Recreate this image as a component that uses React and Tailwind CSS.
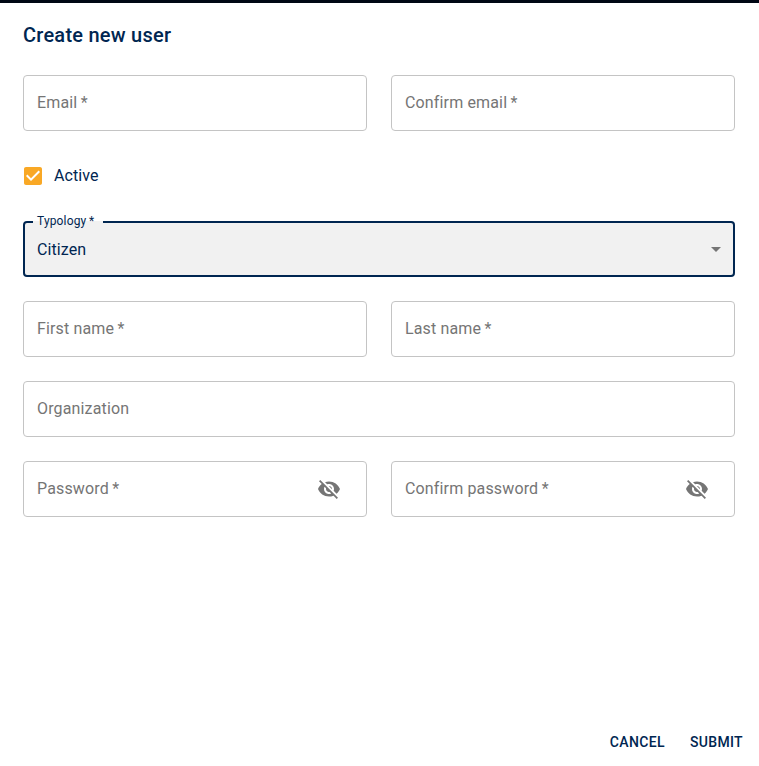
import React from "react";

function VisibilityOff() {
  return (
    <svg className="h-6 w-6 shrink-0 fill-[#757575]" viewBox="0 0 24 24">
      <path d="M12 7c2.76 0 5 2.24 5 5 0 .65-.13 1.26-.36 1.83l2.92 2.92c1.51-1.26 2.7-2.89 3.43-4.75-1.73-4.39-6-7.5-11-7.5-1.4 0-2.74.25-3.98.7l2.16 2.16C10.74 7.13 11.35 7 12 7zM2 4.27l2.28 2.28.46.46C3.08 8.3 1.78 10.02 1 12c1.73 4.39 6 7.5 11 7.5 1.55 0 3.03-.3 4.38-.84l.42.42L19.73 22 21 20.73 3.27 3 2 4.27zM7.53 9.8l1.55 1.55c-.05.21-.08.43-.08.65 0 1.66 1.34 3 3 3 .22 0 .44-.03.65-.08l1.55 1.55c-.67.33-1.41.53-2.2.53-2.76 0-5-2.24-5-5 0-.79.2-1.53.53-2.2zm4.31-.78l3.15 3.15.02-.16c0-1.66-1.34-3-3-3l-.17.01z" />
    </svg>
  );
}

function Field({ label, icon }) {
  return (
    <div className="flex h-14 min-w-0 flex-1 items-center justify-between rounded-[4px] border border-[#c4c4c4] pl-[13px] pr-[25px] text-base tracking-[0.15px] text-[#757575]">
      <span className="-mt-px">{label}</span>
      {icon && <VisibilityOff />}
    </div>
  );
}

export default function App() {
  return (
    <div className="flex h-[766px] w-[759px] flex-col border-t-[3px] border-[#000714] bg-white font-['Roboto',sans-serif] text-[#002651]">
      <h2 className="mt-4 ml-[23px] text-xl leading-8 font-medium tracking-[0.24px]">Create new user</h2>
      <form className="mt-6 flex flex-col px-[23px] pr-6">
        <div className="flex gap-6">
          <Field label="Email&#8201;*" />
          <Field label="Confirm email&#8201;*" />
        </div>
        <label className="mt-6 flex h-[42px] items-center gap-3">
          <svg className="-ml-[2px] h-6 w-6 fill-[#f9a825]" viewBox="0 0 24 24">
            <path d="M19 3H5c-1.11 0-2 .9-2 2v14c0 1.1.89 2 2 2h14c1.11 0 2-.9 2-2V5c0-1.1-.89-2-2-2zm-9 14l-5-5 1.41-1.41L10 14.17l7.59-7.59L19 8l-9 9z" />
          </svg>
          <span className="-ml-[3px] text-base tracking-[0.1px]">Active</span>
        </label>
        <div className="relative mt-6 flex h-14 items-center justify-between rounded-[4px] border-2 border-[#002651] bg-[#f1f1f1] pr-[5px] pl-3">
          <span className="absolute -top-0.5 left-2 h-0.5 w-[70px] bg-[#f1f1f1]" />
          <span className="absolute -top-2 left-3 text-xs leading-3 tracking-[0.15px]">Typology&#8201;*</span>
          <span className="mt-px text-base tracking-[0.1px]">Citizen</span>
          <svg className="h-6 w-6 fill-[#757575]" viewBox="0 0 24 24">
            <path d="M7 10l5 5 5-5z" />
          </svg>
        </div>
        <div className="mt-6 flex gap-6">
          <Field label="First name&#8201;*" />
          <Field label="Last name&#8201;*" />
        </div>
        <div className="mt-6 flex">
          <Field label="Organization" />
        </div>
        <div className="mt-6 flex gap-6">
          <Field label="Password&#8201;*" icon />
          <Field label="Confirm password&#8201;*" icon />
        </div>
      </form>
      <div className="mt-auto mr-4 mb-3 flex justify-end gap-[25px] text-sm leading-6 font-medium tracking-[0.35px]">
        <button>CANCEL</button>
        <button>SUBMIT</button>
      </div>
    </div>
  );
}
